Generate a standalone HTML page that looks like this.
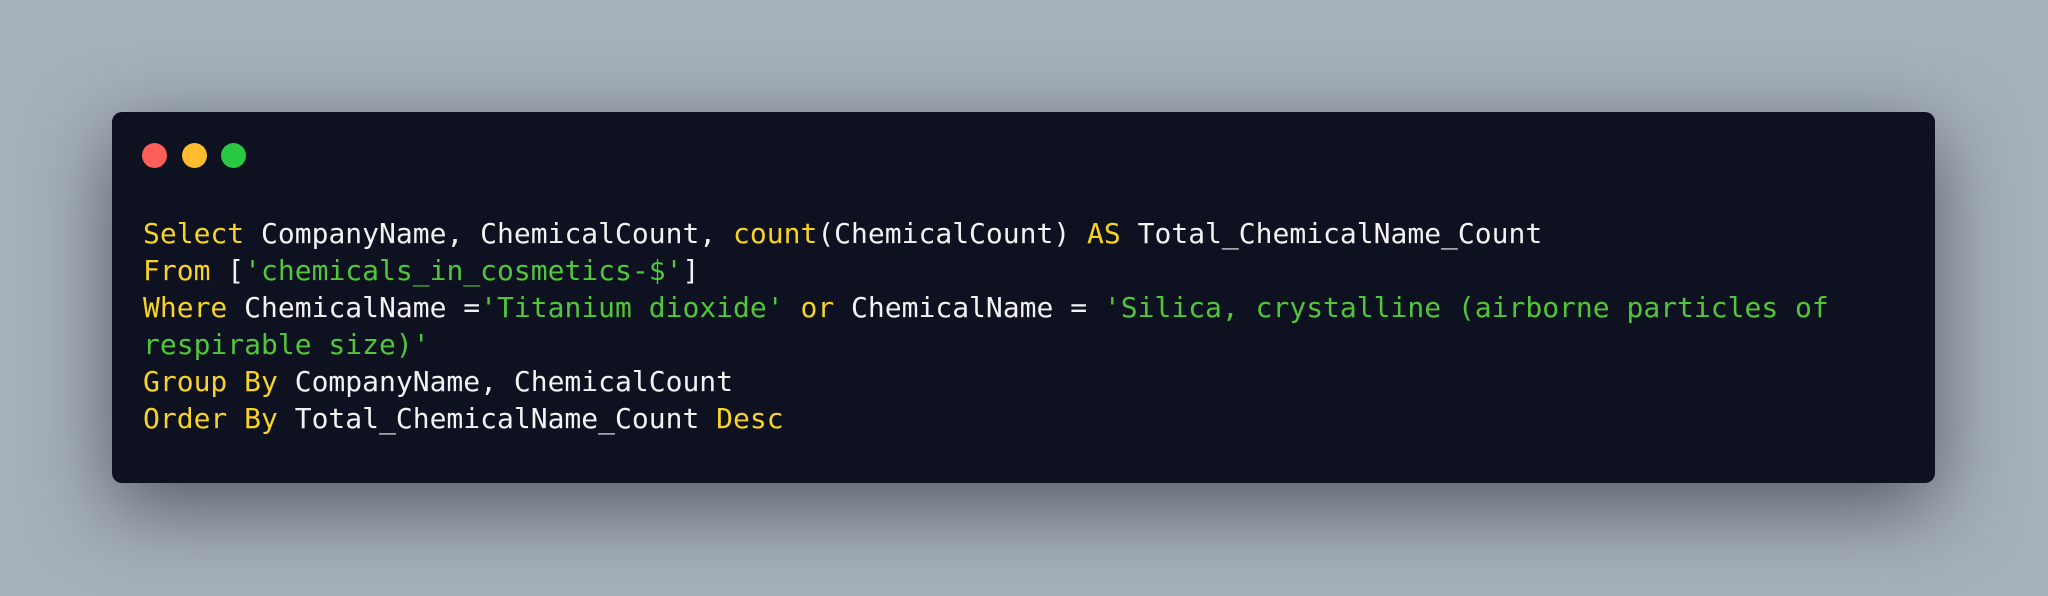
<!DOCTYPE html>
<html><head><style>
html,body{margin:0;padding:0;}
body{width:2048px;height:596px;background:#a6b0ba;position:relative;overflow:hidden;}
.win{position:absolute;left:112px;top:112px;width:1823px;height:371px;background:#0d1120;border-radius:10px;box-shadow:0 24px 80px rgba(30,35,45,0.6);}
.dot{position:absolute;top:143px;width:25px;height:25px;border-radius:50%;}
pre{position:absolute;left:143px;top:215px;margin:0;font-family:"DejaVu Sans Mono","Liberation Mono",monospace;font-size:28px;line-height:37px;color:#f2f2f2;}
.k{color:#f7d325}.s{color:#52c63a}
</style></head><body>
<div class="win"></div>
<div class="dot" style="left:142px;background:#ff5f57"></div>
<div class="dot" style="left:182px;background:#febc2e"></div>
<div class="dot" style="left:221px;background:#28c840"></div>
<pre><span class="k">Select</span> CompanyName, ChemicalCount, <span class="k">count</span>(ChemicalCount) <span class="k">AS</span> Total_ChemicalName_Count
<span class="k">From</span> [<span class="s">'chemicals_in_cosmetics-$'</span>]
<span class="k">Where</span> ChemicalName =<span class="s">'Titanium dioxide'</span> <span class="k">or</span> ChemicalName = <span class="s">'Silica, crystalline (airborne particles of</span>
<span class="s">respirable size)'</span>
<span class="k">Group By</span> CompanyName, ChemicalCount
<span class="k">Order By</span> Total_ChemicalName_Count <span class="k">Desc</span></pre>
</body></html>
